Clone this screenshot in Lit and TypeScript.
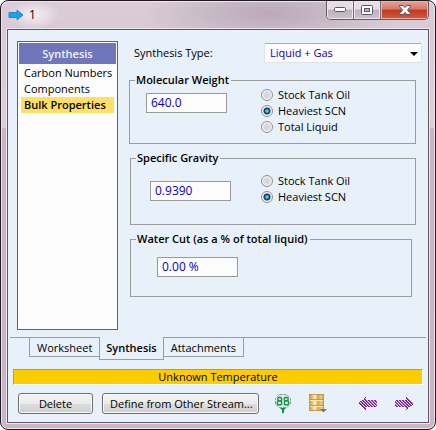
import { LitElement, html, css, svg, nothing } from "lit";
import { customElement, property, state } from "lit/decorators.js";
import { classMap } from "lit/directives/class-map.js";

const shared = css`
  * {
    box-sizing: border-box;
  }
  button,
  input,
  select {
    font: inherit;
    color: inherit;
    margin: 0;
  }
`;

@customElement("property-group")
class PropertyGroup extends LitElement {
  @property() heading = "";
  @property() value = "";
  @property() name = "";
  @property({ type: Array }) options: string[] = [];
  @property() selected = "";

  static styles = [
    shared,
    css`
      :host {
        display: block;
      }
      fieldset {
        display: flex;
        align-items: flex-start;
        margin: 0;
        min-width: 0;
        height: 100%;
        padding: 0 16px 0 var(--group-inset, 16px);
        border: 1px solid #9c9c9c;
      }
      legend {
        margin-left: calc(5px - var(--group-inset, 16px));
        padding: 0 2px 0 1px;
        line-height: 14px;
        font-weight: 600;
        white-space: nowrap;
      }
      .value {
        width: 81px;
        height: 20px;
        margin-top: var(--value-top, 6px);
        padding: 0 4px 2px;
        border: 1px solid #9a9a9a;
        border-radius: 0;
        background: #fcfcfd;
        color: #0a00c0;
        font-size: 12px;
        outline: none;
      }
      .options {
        margin-left: auto;
        width: 138px;
        padding-top: var(--options-top, 0);
      }
      label {
        display: flex;
        align-items: center;
        gap: 5px;
        height: 16px;
        white-space: nowrap;
      }
      input[type="radio"] {
        appearance: none;
        flex: none;
        width: 12px;
        height: 12px;
        border: 1px solid #8c8f94;
        border-radius: 50%;
        background: radial-gradient(circle, #d4d6d9 0 2px, #e8e9ea 4px, #fafafa 5px);
      }
      input[type="radio"]:checked {
        background: radial-gradient(circle at 5px 5px, #5fc6ec 0 1px, #1a6f9f 2px, #0d2f4e 3px, #f2f4f5 4px);
      }
    `,
  ];

  render() {
    return html`<fieldset>
      <legend>${this.heading}</legend>
      <input class="value" type="text" aria-label=${this.heading} .value=${this.value} />
      ${this.options.length
        ? html`<div class="options">
            ${this.options.map(
              (o) => html`<label
                ><input type="radio" name=${this.name} .checked=${o === this.selected} />${o}</label
              >`
            )}
          </div>`
        : nothing}
    </fieldset>`;
  }
}

const streamArrow = svg`<svg width="16" height="12" viewBox="0 0 16 12" aria-hidden="true">
  <path d="M1 3.5H9V1L15 6L9 11V8.5H1Z" fill="#12a5ea" stroke="#2c86ba" stroke-width="1"/></svg>`;

const gauge = svg`<svg width="16" height="19" viewBox="0 0 16 19" aria-hidden="true">
  <path d="M4.5 .5H11.5L15.5 4.5V10L12 13.5H4L.5 10V4.5Z" fill="#dcebe5" stroke="#8d9892" stroke-dasharray="3 1"/>
  <g fill="none" stroke="#12944b" stroke-width="1.4">
  <rect x="3" y="3.5" width="3.6" height="3.4" rx="1"/><rect x="2.4" y="6.9" width="4.2" height="3.8" rx="1"/>
  <rect x="9.4" y="3.5" width="3.6" height="3.4" rx="1"/><rect x="9.4" y="6.9" width="4.2" height="3.8" rx="1"/></g>
  <path d="M5 14H11L9 16V19H7V16Z" fill="#079447"/></svg>`;

const barrel = svg`<svg width="19" height="19" viewBox="0 0 19 19" aria-hidden="true">
  <defs><linearGradient id="gold"><stop offset="0" stop-color="#c9963a"/><stop offset=".2" stop-color="#e3bb66"/>
  <stop offset=".4" stop-color="#fff6c8"/><stop offset=".6" stop-color="#d3a348"/><stop offset=".8" stop-color="#edcf86"/><stop offset="1" stop-color="#c3923c"/></linearGradient></defs>
  <path d="M0 0H15V17H0Z" fill="url(#gold)"/>
  <path d="M0 .5H15M0 5.5H15M0 11.5H15M0 16.5H15" stroke="#c08e3e" stroke-opacity=".8"/>
  <path d="M1 6.5H14M1 12.5H14" stroke="#f7e5ad"/>
  <path d="M11 15H18L14.5 18.5Z" fill="#777"/></svg>`;

// Hatched arrow, one cell per pixel; every third diagonal is paler and the tail fades.
const hatched = (flip: boolean) => {
  const cells = [];
  for (let y = 0; y < 13; y++) {
    const d = Math.abs(y - 6);
    for (let x = 0; x < 19; x++) {
      const inside = x < 8 ? x >= d + (d > 3 ? 1 : 0) : d <= 3;
      if (!inside) continue;
      const px = flip ? 18 - x : x;
      const k = (px - y + 39) % 3;
      const fill = k === 0 ? "#e6d8ee" : k === 1 ? "#72228c" : x > 8 && d < 3 ? "#a06bb4" : "#8440a0";
      cells.push(svg`<rect x=${px} y=${y} width="1" height="1" fill=${fill} />`);
    }
  }
  return svg`<svg width="19" height="13" viewBox="0 0 19 13" shape-rendering="crispEdges" aria-hidden="true">${cells}</svg>`;
};

@customElement("app-root")
class AppRoot extends LitElement {
  @state() private page = "Bulk Properties";
  @state() private tab = "Synthesis";

  static styles = [
    shared,
    css`
      :host {
        display: block;
        font: 11px/16px "Open Sans", "Noto Sans", sans-serif;
        color: #000;
      }
      button {
        padding: 0;
      }
      .window {
        display: flex;
        flex-direction: column;
        min-height: 100vh;
        padding: 0 6px 6px;
        border: 1px solid #1e1a20;
        border-radius: 8px;
        background: radial-gradient(ellipse 130px 34px at 62% 12px, #b9a9b9, transparent),
          linear-gradient(#dbcdd8, #d8c9d6 28px, #dccfda 126px, #c8b4c6 128px, #c9b5c7);
        box-shadow: inset 0 0 0 1px #eee4ec;
      }
      .titlebar {
        display: flex;
        height: 28px;
        padding-left: 1px;
      }
      .title {
        display: flex;
        align-items: center;
        gap: 5px;
        margin: 0;
        padding: 0 24px 0 0;
        font-size: 12px;
        font-weight: 400;
        background: radial-gradient(closest-side, #f6f0f5, transparent);
      }
      .controls {
        display: flex;
        margin-left: auto;
        height: 19px;
        border: 1px solid #625a68;
        border-top: 0;
        border-radius: 0 0 5px 5px;
        overflow: hidden;
      }
      .control {
        display: grid;
        place-items: center;
        width: 27px;
        border: 0;
        border-right: 1px solid #766b7a;
        background: linear-gradient(#e6dde5 0 45%, #bdb0be 50%, #cfc3ce);
        box-shadow: inset 0 0 0 1px #ede6ec;
      }
      .close {
        width: 47px;
        border-right: 0;
        background: linear-gradient(#e3a397, #d67a69 45%, #c03a22 50%, #d4593c);
        box-shadow: inset 0 0 0 1px #eab4a8;
      }
      .client {
        flex: 1;
        display: flex;
        flex-direction: column;
        border: 1px solid #5c565e;
        outline: 1px solid #f0e8ef;
        background: #e8f0fa;
      }
      .main {
        flex: 1;
        display: flex;
        gap: 11px;
        padding: 11px 6px 7px 9px;
      }
      .sidebar {
        width: 101px;
        flex: none;
        padding: 1px;
        border: 1px solid #626262;
        background: #fcfcfd;
      }
      .heading {
        margin: 0 0 1px;
        font-size: 11px;
        font-weight: 600;
        line-height: 21px;
        text-align: center;
        color: #f0f2fa;
        background: #7076ba;
      }
      .pages {
        margin: 0;
        padding: 0 2px;
        list-style: none;
      }
      .page {
        display: block;
        width: 100%;
        height: 16px;
        padding: 0 3px;
        border: 0;
        background: none;
        text-align: left;
        white-space: nowrap;
      }
      .page.current {
        font-weight: 600;
        background: #ffe066;
      }
      .form {
        flex: 1;
        min-width: 0;
        padding-top: 2px;
      }
      .type {
        display: flex;
        align-items: center;
        justify-content: space-between;
        height: 20px;
        margin-bottom: 10px;
        padding-left: 5px;
      }
      .picker {
        position: relative;
        width: 158px;
      }
      .picker select {
        display: block;
        appearance: none;
        width: 100%;
        height: 20px;
        padding: 0 5px 1px;
        border: 1px solid #dfe3e8;
        border-top-color: #a9adb2;
        border-radius: 2px;
        background: #fcfcfd;
        color: #0a00c0;
      }
      .picker svg {
        position: absolute;
        right: 4px;
        top: 9px;
        pointer-events: none;
      }
      .groups {
        display: grid;
        grid-template-rows: 71px 74px 65px;
        row-gap: 7px;
        padding-right: 6px;
      }
      .gravity {
        margin-left: 1px;
        --group-inset: 19px;
        --value-top: 16px;
        --options-top: 8px;
      }
      .water {
        margin: 0 4px 0 1px;
        --group-inset: 26px;
        --value-top: 11px;
      }
      .tabs {
        display: flex;
        align-items: flex-start;
        height: 32px;
        margin: 0 2px;
        padding-left: 19px;
        border-top: 1px solid #9c9c9c;
      }
      .tab {
        height: 19px;
        padding: 2px 7px 0;
        border: 1px solid #9c9c9c;
        border-top: 0;
        background: none;
        line-height: 16px;
        white-space: nowrap;
      }
      .tab.active {
        height: 23px;
        margin: -1px -1px 0;
        padding: 0 6px;
        font-weight: 600;
        background: #e8f0fa;
      }
      .status {
        height: 16px;
        margin: 0 5px;
        border: 1px solid;
        border-color: #999 #fff #fff #999;
        line-height: 14px;
        text-align: center;
        background: #ffcc00;
      }
      .actions {
        display: flex;
        align-items: center;
        padding: 8px 14px 8px 10px;
      }
      .push {
        height: 21px;
        margin-right: 9px;
        padding: 0 7px;
        border: 1px solid #707070;
        border-radius: 3px;
        background: linear-gradient(#f3f3f3, #ebebeb 50%, #dcdcdc 52%, #cfcfcf);
        box-shadow: inset 0 0 0 1px #fafafa;
        line-height: 18px;
        white-space: nowrap;
      }
      .delete {
        width: 75px;
      }
      .define {
        width: 157px;
      }
      .icon {
        display: block;
        border: 0;
        background: none;
        line-height: 0;
      }
      .tools,
      .nav {
        display: flex;
        align-items: center;
        gap: 18px;
      }
      .tools {
        margin-left: 7px;
      }
      .nav {
        margin-left: auto;
      }
    `,
  ];

  render() {
    return html`<div class="window">
      <header class="titlebar">
        <h1 class="title">${streamArrow}1</h1>
        <div class="controls">
          <button class="control" aria-label="Minimize">
            <svg width="12" height="6" viewBox="0 0 12 6">
              <rect x=".5" y=".5" width="11" height="4" rx="1" fill="#fff" stroke="#56566b" />
            </svg>
          </button>
          <button class="control" aria-label="Maximize">
            <svg width="12" height="10" viewBox="0 0 12 10">
              <rect x=".5" y=".5" width="11" height="9" rx="1" fill="#fff" stroke="#56566b" />
              <rect x="3.5" y="3.5" width="5" height="3" fill="#bdb0be" stroke="#56566b" />
            </svg>
          </button>
          <button class="control close" aria-label="Close">
            <svg width="12" height="10" viewBox="0 0 12 10">
              <path d="M.5 .5H4L6 2.5L8 .5H11.5V1.5L8.5 5L11.5 8.5V9.5H8L6 7.5L4 9.5H.5V8.5L3.5 5L.5 1.5Z" fill="#fff" stroke="#56495c" />
            </svg>
          </button>
        </div>
      </header>
      <div class="client">
        <main class="main">
          <nav class="sidebar">
            <h2 class="heading">Synthesis</h2>
            <ul class="pages">
              ${["Carbon Numbers", "Components", "Bulk Properties"].map(
                (p) => html`<li>
                  <button class=${classMap({ page: true, current: p === this.page })} @click=${() => (this.page = p)}>${p}</button>
                </li>`
              )}
            </ul>
          </nav>
          <section class="form">
            <div class="type">
              <label for="type">Synthesis Type:</label>
              <div class="picker">
                <select id="type">
                  <option>Liquid + Gas</option>
                </select>
                <svg width="8" height="4" viewBox="0 0 8 4" aria-hidden="true"><path d="M0 0H8L4 4Z" /></svg>
              </div>
            </div>
            <div class="groups">
              <property-group
                heading="Molecular Weight"
                name="weight"
                value="640.0"
                .options=${["Stock Tank Oil", "Heaviest SCN", "Total Liquid"]}
                selected="Heaviest SCN"
              ></property-group>
              <property-group
                class="gravity"
                heading="Specific Gravity"
                name="gravity"
                value="0.9390"
                .options=${["Stock Tank Oil", "Heaviest SCN"]}
                selected="Heaviest SCN"
              ></property-group>
              <property-group class="water" heading="Water Cut (as a % of total liquid)" value="0.00 %"></property-group>
            </div>
          </section>
        </main>
        <div class="tabs" role="tablist">
          ${["Worksheet", "Synthesis", "Attachments"].map(
            (t) => html`<button
              role="tab"
              aria-selected=${t === this.tab}
              class=${classMap({ tab: true, active: t === this.tab })}
              @click=${() => (this.tab = t)}
            >${t}</button>`
          )}
        </div>
        <div class="status" role="status">Unknown Temperature</div>
        <footer class="actions">
          <button class="push delete">Delete</button>
          <button class="push define">Define from Other Stream...</button>
          <div class="tools">
            <button class="icon" aria-label="Stream values">${gauge}</button>
            <button class="icon" aria-label="Stream type">${barrel}</button>
          </div>
          <div class="nav">
            <button class="icon" aria-label="Previous stream">${hatched(false)}</button>
            <button class="icon" aria-label="Next stream">${hatched(true)}</button>
          </div>
        </footer>
      </div>
    </div>`;
  }
}
